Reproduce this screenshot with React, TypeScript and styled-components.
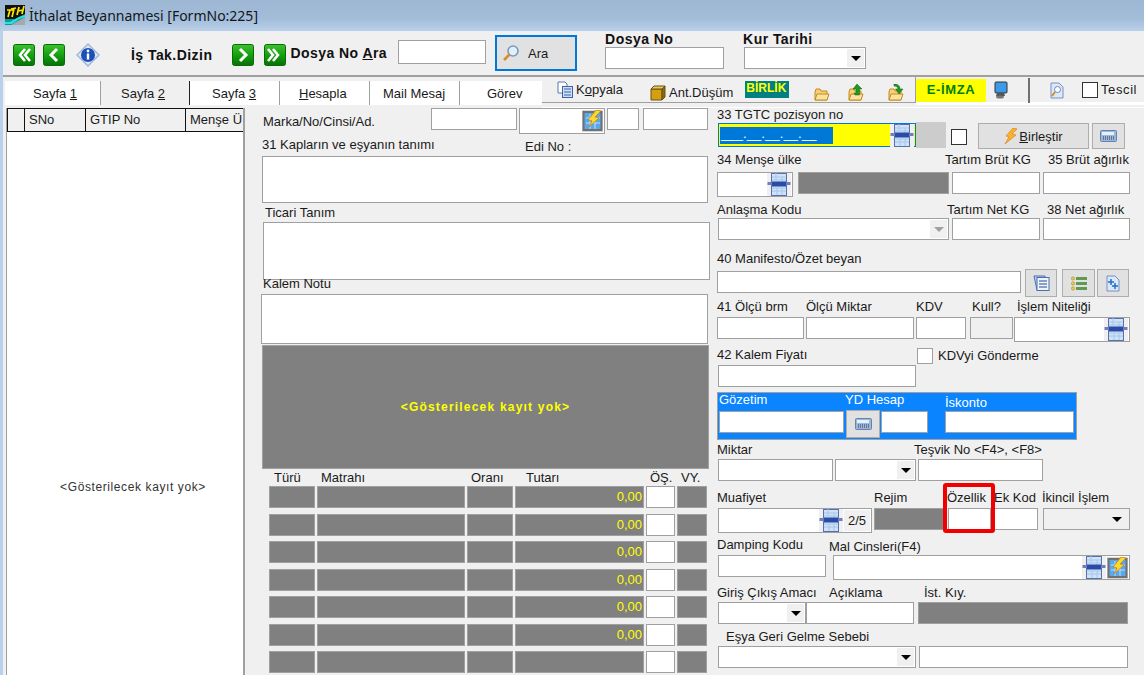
import React from 'react';
import styled, { createGlobalStyle } from 'styled-components';

const GlobalStyle = createGlobalStyle`
  html, body {
    margin: 0;
    padding: 0;
    background: #f0f0f0;
  }
  body {
    font-family: "Liberation Sans", Arial, sans-serif;
    font-size: 13px;
    color: #1a1a1a;
  }
`;

const Screen = styled.div`
  width: 1144px;
  height: 675px;
  overflow: hidden;
  display: flex;
  flex-direction: column;
  background: #f0f0f0;
`;

const TitleBar = styled.div`
  height: 31px;
  flex: none;
  display: flex;
  align-items: center;
  gap: 4px;
  padding-left: 5px;
  background: linear-gradient(#9db7d4, #a3bcd8 60%, #b9d1ea);
  font-family: "Noto Sans", sans-serif;
  font-size: 14px;
  color: #101820;
`;

const Window = styled.div`
  flex: 1;
  min-height: 0;
  display: flex;
  flex-direction: column;
  border-left: 3px solid #b9d1ea;
`;

const Toolbar = styled.div`
  height: 46px;
  flex: none;
  box-sizing: border-box;
  display: flex;
  border-bottom: 2px solid #a0a0a0;
`;

const ToolSlot = styled.div<{ $ml?: number; $mt?: number }>`
  flex: none;
  margin-left: ${(p) => p.$ml ?? 0}px;
  margin-top: ${(p) => p.$mt ?? 0}px;
  align-self: flex-start;
  display: flex;
`;

const BoldText = styled.span<{ $ml?: number; $mt?: number }>`
  flex: none;
  margin-left: ${(p) => p.$ml ?? 0}px;
  margin-top: ${(p) => p.$mt ?? 0}px;
  line-height: 16px;
  font-weight: bold;
  font-size: 14px;
  letter-spacing: 0.45px;
  color: #111;
  white-space: nowrap;
`;

const AraButton = styled.div`
  flex: none;
  margin-left: 9px;
  margin-top: 4px;
  width: 82px;
  height: 36px;
  box-sizing: border-box;
  border: 2px solid #0078d7;
  background: #e1e1e1;
  display: flex;
  align-items: center;
  padding-left: 5px;
  gap: 8px;
`;

const ToolField = styled.div<{ $ml: number }>`
  flex: none;
  margin-left: ${(p) => p.$ml}px;
  display: flex;
  flex-direction: column;
`;

const TabRow = styled.div`
  height: 28px;
  flex: none;
  display: flex;
`;

const TabStrip = styled.div`
  flex: none;
  margin-left: 2px;
  margin-top: 4px;
  height: 24px;
  display: flex;
  background: #fff;
`;

const Tab = styled.div<{ $w: number; $pl: number; $active?: boolean; $dark?: boolean; $last?: boolean }>`
  box-sizing: border-box;
  width: ${(p) => p.$w}px;
  padding-left: ${(p) => p.$pl}px;
  line-height: 26px;
  background: ${(p) => (p.$active ? '#f0f0f0' : '#fff')};
  border-right: ${(p) => (p.$last ? 'none' : `1px solid ${p.$dark ? '#222' : '#a0a0a0'}`)};
  white-space: nowrap;
`;

const ActionStrip = styled.div`
  box-sizing: border-box;
  width: 374px;
  height: 26px;
  flex: none;
  display: flex;
  align-items: center;
  border-right: 1px solid #a0a0a0;
  border-bottom: 1px solid #a0a0a0;
`;

const ActionItem = styled.div<{ $ml: number; $mt?: number }>`
  flex: none;
  margin-left: ${(p) => p.$ml}px;
  margin-top: ${(p) => p.$mt ?? 0}px;
  display: flex;
  align-items: center;
  gap: 3px;
  white-space: nowrap;
`;

const BirlikBadge = styled.div`
  flex: none;
  margin-left: 12px;
  width: 44px;
  height: 17px;
  background: #008080;
  color: #ffff00;
  font-weight: bold;
  font-size: 12px;
  line-height: 14px;
  padding-left: 1px;
  box-sizing: border-box;
  white-space: nowrap;
`;

const EImza = styled.div`
  flex: none;
  margin-top: 1px;
  width: 70px;
  height: 23px;
  background: #ffff00;
  color: #008000;
  font-weight: bold;
  font-size: 13px;
  line-height: 21px;
  letter-spacing: 0.6px;
  text-align: center;
`;

const TopRight = styled.div`
  flex: none;
  width: 228px;
  height: 28px;
  box-sizing: border-box;
  padding-bottom: 2px;
  display: flex;
  align-items: center;
  background: linear-gradient(#fff, #fff) bottom / 100% 3px no-repeat;
`;

const ThickRule = styled.div`
  flex: none;
  width: 2px;
  height: 25px;
  margin-left: 20px;
  background: #707070;
`;

const TescilText = styled.span`
  letter-spacing: 0.6px;
`;

const Main = styled.div`
  flex: 1;
  min-height: 0;
  display: flex;
  background: linear-gradient(#fff, #fff) 539px 2px / 602px 1px no-repeat;
`;

const GridPane = styled.div`
  flex: none;
  margin-left: 3px;
  margin-top: 3px;
  width: 239px;
  box-sizing: border-box;
  border-left: 1px solid #a0a0a0;
  border-right: 2px solid #a0a0a0;
  background: #fff;
  display: flex;
  flex-direction: column;
`;

const GridHead = styled.div`
  height: 24px;
  flex: none;
  box-sizing: border-box;
  display: flex;
  border-top: 1px solid #111;
  border-bottom: 1px solid #111;
  background: #f0f0f0;
  overflow: hidden;
`;

const GridCol = styled.div<{ $w: number }>`
  flex: none;
  box-sizing: border-box;
  width: ${(p) => p.$w}px;
  padding-left: 4px;
  line-height: 22px;
  border-left: 1px solid #111;
  white-space: nowrap;
`;

const EmptyBody = styled.div`
  flex: 1;
  display: flex;
  align-items: center;
  justify-content: center;
  padding-top: 166px;
  padding-left: 16px;
  font-size: 12px;
  letter-spacing: 0.6px;
  color: #333;
`;

const CenterCol = styled.div`
  flex: none;
  width: 472px;
  display: flex;
  flex-direction: column;
`;

const RightCol = styled.div`
  flex: none;
  position: relative;
  width: 427px;
  display: flex;
  flex-direction: column;
`;

const FormRow = styled.div<{ $h: number; $mt?: number }>`
  flex: none;
  display: flex;
  align-items: flex-start;
  height: ${(p) => p.$h}px;
  margin-top: ${(p) => p.$mt ?? 0}px;
`;

const Lbl = styled.span<{ $w?: number; $ml?: number; $mt?: number; $white?: boolean }>`
  flex: none;
  display: block;
  box-sizing: border-box;
  ${(p) => (p.$w ? `width: ${p.$w}px;` : '')}
  margin-left: ${(p) => p.$ml ?? 0}px;
  margin-top: ${(p) => p.$mt ?? 0}px;
  line-height: 18px;
  color: ${(p) => (p.$white ? '#fff' : '#1a1a1a')};
  white-space: nowrap;
`;

const Field = styled.div<{ $w: number; $h?: number; $ml?: number; $mt?: number; $bg?: string; $edge?: string }>`
  flex: none;
  box-sizing: border-box;
  width: ${(p) => p.$w}px;
  height: ${(p) => p.$h ?? 22}px;
  margin-left: ${(p) => p.$ml ?? 0}px;
  margin-top: ${(p) => p.$mt ?? 0}px;
  border: 1px solid ${(p) => p.$edge ?? '#a0a0a0'};
  background: ${(p) => p.$bg ?? '#fff'};
  display: flex;
  align-items: center;
  justify-content: flex-end;
`;

const DropButton = styled.div<{ $disabled?: boolean }>`
  width: 17px;
  height: 18px;
  margin-right: 1px;
  background: #f0f0f0;
  display: flex;
  align-items: center;
  justify-content: center;
  &::after {
    content: '';
    border-left: 5px solid transparent;
    border-right: 5px solid transparent;
    border-top: 5px solid ${(p) => (p.$disabled ? '#a0a0a0' : '#000')};
  }
`;

const FlatArrow = styled.div`
  margin-right: 7px;
  border-left: 5px solid transparent;
  border-right: 5px solid transparent;
  border-top: 5px solid #000;
`;

const MaskFill = styled.div`
  flex: none;
  margin-right: auto;
  margin-left: 1px;
  box-sizing: border-box;
  width: 113px;
  height: 17px;
  background: #0078d7;
  color: #fff;
  font-size: 13px;
  line-height: 13px;
  padding-left: 1px;
  letter-spacing: 0.1px;
  white-space: nowrap;
  overflow: hidden;
`;

const Button = styled.div<{ $w: number; $h?: number; $ml?: number; $mt?: number; $bg?: string; $edge?: string }>`
  flex: none;
  box-sizing: border-box;
  width: ${(p) => p.$w}px;
  height: ${(p) => p.$h ?? 26}px;
  margin-left: ${(p) => p.$ml ?? 0}px;
  margin-top: ${(p) => p.$mt ?? 0}px;
  border: 1px solid ${(p) => p.$edge ?? '#adadad'};
  background: ${(p) => p.$bg ?? '#e1e1e1'};
  display: flex;
  align-items: center;
  justify-content: center;
  gap: 1px;
`;

const CheckBox = styled.div<{ $ml?: number; $mt?: number; $dark?: boolean }>`
  flex: none;
  box-sizing: border-box;
  width: 16px;
  height: 16px;
  margin-left: ${(p) => p.$ml ?? 0}px;
  margin-top: ${(p) => p.$mt ?? 0}px;
  background: #fff;
  border: 1px solid ${(p) => (p.$dark ? '#333' : '#a0a0a0')};
`;

const GrayPanel = styled.div`
  flex: none;
  box-sizing: border-box;
  margin-left: 17px;
  margin-top: 1px;
  width: 447px;
  height: 124px;
  background: #808080;
  border: 1px solid #a0a0a0;
  display: flex;
  align-items: center;
  justify-content: center;
  color: #ffff00;
  font-weight: bold;
  font-size: 12px;
  letter-spacing: 1.2px;
`;

const TaxLine = styled.div<{ $mt?: number }>`
  flex: none;
  display: grid;
  grid-template-columns: 46px 148px 46px 129px 29px 30px;
  column-gap: 2px;
  margin-left: 24px;
  margin-top: ${(p) => p.$mt ?? 0}px;
  height: 22px;
`;

const TaxCell = styled.div<{ $white?: boolean }>`
  box-sizing: border-box;
  border: 1px solid #a0a0a0;
  background: ${(p) => (p.$white ? '#fff' : '#808080')};
  color: #ffff00;
  font-size: 13px;
  line-height: 20px;
  text-align: right;
  padding-right: 1px;
`;

const BluePanel = styled.div`
  flex: none;
  box-sizing: border-box;
  width: 360px;
  height: 48px;
  margin-top: 5px;
  border: 1px solid #a0a0a0;
  background: #0a84ff;
`;

const KalemCol = styled.div`
  flex: none;
  display: flex;
  flex-direction: column;
  width: 200px;
`;

const RedMark = styled.div`
  position: absolute;
  left: 226px;
  top: 378px;
  width: 52px;
  height: 50px;
  box-sizing: border-box;
  border: 4px solid #f00000;
  border-radius: 3px;
  pointer-events: none;
`;

const Pager = styled.span`
  flex: none;
  width: 26px;
  height: 21px;
  margin-right: 1px;
  background: #f0f0f0;
  line-height: 21px;
  text-align: center;
`;

const Logo = () => (
  <svg width="20" height="22" viewBox="0 0 20 22">
    <rect x="0" y="0" width="20" height="20" fill="#0a9c92" />
    <path d="M0 0 H20 V9 L10 14 H0 Z" fill="#111" />
    <path d="M20 12 V20 H6 Z" fill="#a8a8a8" />
    <path d="M0 17 L5 17 L14 12 L20 10 V12 L14 14 L7 19 L0 19 Z" fill="#27e3ea" />
    <path d="M3 12 L5 5 M2 5 L8 5 M7 12 L9 4 M6 4 L11 3 M12 10 L14 2 M17 9 L19 1 M13 6 L18 5" stroke="#ffe600" strokeWidth="1.7" fill="none" />
  </svg>
);

const GreenButton = ({ dir, double }: { dir: 'l' | 'r'; double?: boolean }) => {
  const pts = dir === 'l' ? ['12,5 7,11 12,17', '17,5 12,11 17,17'] : ['9,5 14,11 9,17', '4,5 9,11 4,17'];
  return (
    <svg width="22" height="22" viewBox="0 0 22 22">
      <defs>
        <linearGradient id="grn" x1="0" y1="0" x2="0" y2="1">
          <stop offset="0" stopColor="#3dc22f" />
          <stop offset="0.5" stopColor="#15a010" />
          <stop offset="1" stopColor="#067006" />
        </linearGradient>
      </defs>
      <rect x="0.5" y="0.5" width="21" height="21" rx="2" fill="url(#grn)" stroke="#0b6b0b" />
      {double ? (
        pts.map((p) => <polyline key={p} points={p} fill="none" stroke="#fff" strokeWidth="2.6" />)
      ) : (
        <polyline points={dir === 'l' ? '14,5 8,11 14,17' : '8,5 14,11 8,17'} fill="none" stroke="#fff" strokeWidth="3" />
      )}
    </svg>
  );
};

const InfoIcon = () => (
  <svg width="24" height="24" viewBox="0 0 24 24">
    <path d="M12 1 L23 12 L12 23 L1 12 Z" fill="#dfe8f6" stroke="#9fb4d8" strokeWidth="1.4" />
    <circle cx="12" cy="12" r="7" fill="#1c50b8" />
    <circle cx="12" cy="8" r="1.4" fill="#fff" />
    <rect x="10.8" y="10.5" width="2.4" height="6" fill="#fff" />
  </svg>
);

const MagnifierIcon = () => (
  <svg width="18" height="18" viewBox="0 0 18 18">
    <circle cx="11" cy="7" r="5" fill="#dff0fb" stroke="#7a9ab8" strokeWidth="1.6" />
    <path d="M7.5 10.5 L2 16" stroke="#d98a2b" strokeWidth="2.6" />
  </svg>
);

const LookupIcon = () => (
  <svg width="24" height="23" viewBox="0 0 24 23" style={{ flex: 'none', marginRight: 1 }}>
    <rect x="0" y="0" width="24" height="23" fill="#f0f0f0" />
    <rect x="4.5" y="0.5" width="15" height="22" fill="#cfe3f7" stroke="#5a6fb0" />
    <path d="M5 4 H19 M5 7 H19 M5 15 H19 M5 18 H19 M9 0 V7 M15 4 V10 M10 15 V22 M15 15 V22" stroke="#a5c6ea" strokeWidth="1" />
    <rect x="0.5" y="9" width="23" height="3" fill="#6f7fbe" />
    <rect x="5" y="8.5" width="14" height="5" fill="#2c4aa8" />
  </svg>
);

const BoltIcon = () => (
  <svg width="14" height="17" viewBox="0 0 14 17">
    <path d="M9 0 L13 1 L8 6 L12 7 L1 16 L5 9 L2 8 Z" fill="#f7b52a" stroke="#e0701a" strokeWidth="0.6" />
  </svg>
);

const CalcIcon = () => (
  <svg width="17" height="12" viewBox="0 0 17 12">
    <rect x="0.5" y="0.5" width="16" height="11" rx="1" fill="#9ab8de" stroke="#6a80a8" />
    <rect x="2" y="2" width="12" height="3" fill="#e6f0fa" />
    <path d="M3 7 H14 M3 9 H14" stroke="#334" strokeWidth="1" strokeDasharray="1 1" />
  </svg>
);

const WallBoltIcon = () => (
  <svg width="21" height="22" viewBox="0 0 21 22" style={{ flex: 'none', marginRight: 1 }}>
    <rect x="0" y="0" width="21" height="22" fill="#d8d8d8" />
    <rect x="1.5" y="2" width="18" height="18" fill="#5aa8e8" stroke="#707070" strokeWidth="2" />
    <path d="M4 8 H18 M4 13 H18 M8 4 V19 M13 4 V19" stroke="#b9e0fb" />
    <path d="M14 0 L19 1 L13 7 L17 8 L7 17 L10 11 L6 10 Z" fill="#f6dc2a" stroke="#d0701a" strokeWidth="0.7" />
  </svg>
);

const NotesIcon = () => (
  <svg width="17" height="18" viewBox="0 0 17 18">
    <path d="M1 2 H12 V16 H4 Z" fill="#b8d4f0" stroke="#4a6fb0" />
    <rect x="4" y="3.5" width="12" height="13" fill="#eef5fd" stroke="#4a6fb0" />
    <path d="M6 7 H14 M6 10 H14 M6 13 H14" stroke="#2a4a90" />
  </svg>
);

const ListIcon = () => (
  <svg width="16" height="15" viewBox="0 0 16 15">
    <circle cx="2" cy="2.5" r="1.6" fill="#f4d040" stroke="#a08020" strokeWidth="0.6" />
    <circle cx="2" cy="7.5" r="1.6" fill="#f4d040" stroke="#a08020" strokeWidth="0.6" />
    <circle cx="2" cy="12.5" r="1.6" fill="#f4d040" stroke="#a08020" strokeWidth="0.6" />
    <rect x="5" y="1" width="11" height="3" fill="#5f9a50" />
    <rect x="5" y="6" width="11" height="3" fill="#5f9a50" />
    <rect x="5" y="11" width="11" height="3" fill="#5f9a50" />
  </svg>
);

const PageAddIcon = () => (
  <svg width="14" height="17" viewBox="0 0 14 17">
    <path d="M1 1 H9 L13 5 V16 H1 Z" fill="#dbe8f8" stroke="#7a90c0" />
    <path d="M5 4 V10 M2 7 H8 M9 8 V14 M6 11 H12" stroke="#1c6fd0" strokeWidth="1.5" />
  </svg>
);

const CopyIcon = () => (
  <svg width="16" height="17" viewBox="0 0 16 17">
    <path d="M1 1 H8 L10 3 V12 H1 Z" fill="#fff" stroke="#5a78b0" />
    <rect x="5.5" y="5.5" width="10" height="11" fill="#cfe0f6" stroke="#3d62a8" />
    <path d="M7 8 H14 M7 11 H14 M7 14 H14" stroke="#3d62a8" />
  </svg>
);

const CrateIcon = () => (
  <svg width="16" height="16" viewBox="0 0 16 16">
    <path d="M1 4 H12 V15 H1 Z" fill="#d4a010" stroke="#6a5010" />
    <path d="M1 4 L4 1 H15 L12 4 Z" fill="#e8c860" stroke="#6a5010" />
    <path d="M12 4 L15 1 V12 L12 15 Z" fill="#8a6c10" stroke="#6a5010" />
  </svg>
);

const FolderIcon = ({ arrow }: { arrow?: 'up' | 'right' }) => (
  <svg width="16" height="18" viewBox="0 0 16 18">
    <path d="M1 8 V16 H13 V7 H7 L6 5 H2 Z" fill="#f7d074" stroke="#c58a1e" />
    <path d="M1 16 L3 10 H15 L13 16 Z" fill="#fbe2a0" stroke="#c58a1e" />
    {arrow === 'up' && <path d="M9 0 L14 5 H11.5 V11 H7 L6 9 H8 V5 H5 Z" fill="#1f9a1f" stroke="#146014" strokeWidth="0.5" />}
    {arrow === 'right' && <path d="M6 0 C10 0 12 2 12 5 H15 L11 10 L7.5 5 H10 C10 3 8 2 6 2 Z" fill="#1f9a1f" stroke="#146014" strokeWidth="0.5" />}
  </svg>
);

const MonitorIcon = () => (
  <svg width="14" height="18" viewBox="0 0 14 18">
    <rect x="1" y="1" width="12" height="11" rx="1" fill="#3c9ae8" stroke="#333" />
    <path d="M3 12 L2 15 H11 L10 12 Z" fill="#555" />
    <ellipse cx="6" cy="16" rx="4" ry="1.5" fill="#777" />
  </svg>
);

const PreviewIcon = () => (
  <svg width="14" height="17" viewBox="0 0 14 17">
    <path d="M1 1 H9 L13 5 V16 H1 Z" fill="#dbe8f8" stroke="#7a90c0" />
    <circle cx="7.5" cy="7.5" r="3" fill="#fff" stroke="#6a86b8" />
    <path d="M5 10 L2 14" stroke="#d98a2b" strokeWidth="2" />
  </svg>
);

const taxRows = [
  { mt: 0, val: '0,00' },
  { mt: 6, val: '0,00' },
  { mt: 5, val: '0,00' },
  { mt: 6, val: '0,00' },
  { mt: 5, val: '0,00' },
  { mt: 6, val: '0,00' },
  { mt: 5, val: '' },
];

export default function App() {
  return (
    <Screen>
      <GlobalStyle />
      <TitleBar>
        <Logo />
        İthalat Beyannamesi [FormNo:225]
      </TitleBar>
      <Window>
        <Toolbar>
          <ToolSlot $ml={10} $mt={13}><GreenButton dir="l" double /></ToolSlot>
          <ToolSlot $ml={8} $mt={13}><GreenButton dir="l" /></ToolSlot>
          <ToolSlot $ml={11} $mt={12}><InfoIcon /></ToolSlot>
          <BoldText $ml={31} $mt={16}>İş Tak.Dizin</BoldText>
          <ToolSlot $ml={20} $mt={13}><GreenButton dir="r" /></ToolSlot>
          <ToolSlot $ml={10} $mt={13}><GreenButton dir="r" double /></ToolSlot>
          <BoldText $ml={4} $mt={14}>Dosya No <u>A</u>ra</BoldText>
          <Field $w={88} $h={24} $ml={11} $mt={9} />
          <AraButton><MagnifierIcon />Ara</AraButton>
          <ToolField $ml={28}>
            <BoldText>Dosya No</BoldText>
            <Field $w={119} />
          </ToolField>
          <ToolField $ml={20}>
            <BoldText $ml={-1}>Kur Tarihi</BoldText>
            <Field $w={122}><DropButton /></Field>
          </ToolField>
        </Toolbar>
        <TabRow>
          <TabStrip>
            <Tab $w={96} $pl={28}>Sayfa <u>1</u></Tab>
            <Tab $w={89} $pl={20} $active $dark>Sayfa <u>2</u></Tab>
            <Tab $w={90} $pl={22}>Sayfa <u>3</u></Tab>
            <Tab $w={90} $pl={19}><u>H</u>esapla</Tab>
            <Tab $w={90} $pl={13}>Mail Mesaj</Tab>
            <Tab $w={82} $pl={27} $last>Görev</Tab>
          </TabStrip>
          <ActionStrip>
            <ActionItem $ml={15} $mt={-1}><CopyIcon /><span>K<u>o</u>pyala</span></ActionItem>
            <ActionItem $ml={27} $mt={6}><CrateIcon /><span>Ant.Düşüm</span></ActionItem>
            <BirlikBadge>BİRLİK</BirlikBadge>
            <ActionItem $ml={25} $mt={6}><FolderIcon /></ActionItem>
            <ActionItem $ml={18} $mt={6}><FolderIcon arrow="up" /></ActionItem>
            <ActionItem $ml={24} $mt={6}><FolderIcon arrow="right" /></ActionItem>
          </ActionStrip>
          <TopRight>
            <EImza>E-İMZA</EImza>
            <ActionItem $ml={8}><MonitorIcon /></ActionItem>
            <ThickRule />
            <ActionItem $ml={20}><PreviewIcon /></ActionItem>
            <CheckBox $ml={18} $dark />
            <ActionItem $ml={3} $mt={-1}><TescilText>Tescil</TescilText></ActionItem>
          </TopRight>
        </TabRow>
        <Main>
          <GridPane>
            <GridHead>
              <GridCol $w={17} />
              <GridCol $w={61}>SNo</GridCol>
              <GridCol $w={100}>GTIP No</GridCol>
              <GridCol $w={60}>Menşe Ü</GridCol>
            </GridHead>
            <EmptyBody>{'<Gösterilecek kayıt yok>'}</EmptyBody>
          </GridPane>

          <CenterCol>
            <FormRow $h={26} $mt={3}>
              <Lbl $w={168} $ml={18} $mt={5}>Marka/No/Cinsi/Ad.</Lbl>
              <Field $w={86} />
              <Field $w={86} $h={26} $ml={2}><WallBoltIcon /></Field>
              <Field $w={32} $ml={2} />
              <Field $w={65} $ml={4} />
            </FormRow>
            <FormRow $h={22}>
              <Lbl $w={263} $ml={17} $mt={2}>31 Kapların ve eşyanın tanımı</Lbl>
              <Lbl $mt={4}>Edi No :</Lbl>
            </FormRow>
            <Field $w={446} $h={47} $ml={17} />
            <FormRow $h={19}>
              <Lbl $ml={20} $mt={1}>Ticari Tanım</Lbl>
            </FormRow>
            <Field $w={447} $h={58} $ml={18} />
            <FormRow $h={14}>
              <Lbl $ml={18} $mt={-5}>Kalem Notu</Lbl>
            </FormRow>
            <Field $w={447} $h={50} $ml={16} />
            <GrayPanel>{'<Gösterilecek kayıt yok>'}</GrayPanel>
            <FormRow $h={17}>
              <Lbl $w={47} $ml={29}>Türü</Lbl>
              <Lbl $w={150}>Matrahı</Lbl>
              <Lbl $w={55}>Oranı</Lbl>
              <Lbl $w={124}>Tutarı</Lbl>
              <Lbl $w={31}>ÖŞ.</Lbl>
              <Lbl>VY.</Lbl>
            </FormRow>
            {taxRows.map((r, i) => (
              <TaxLine key={i} $mt={r.mt}>
                <TaxCell />
                <TaxCell />
                <TaxCell />
                <TaxCell>{r.val}</TaxCell>
                <TaxCell $white />
                <TaxCell />
              </TaxLine>
            ))}
          </CenterCol>

          <RightCol>
            <FormRow $h={17}>
              <Lbl $mt={1}>33 TGTC pozisyon no</Lbl>
            </FormRow>
            <FormRow $h={27}>
              <Field $w={198} $h={24} $ml={1} $mt={1} $bg="#ffff00" $edge="#0078d7">
                <MaskFill>___.__.__.__.__</MaskFill>
                <LookupIcon />
              </Field>
              <Button $w={30} $bg="#cccccc" $edge="#cccccc" />
              <CheckBox $ml={5} $mt={7} $dark />
              <Button $w={111} $ml={11} $mt={1}><BoltIcon /><span><u>B</u>irleştir</span></Button>
              <Button $w={33} $ml={3} $mt={1}><CalcIcon /></Button>
            </FormRow>
            <FormRow $h={23}>
              <Lbl $w={228} $mt={2}>34 Menşe ülke</Lbl>
              <Lbl $w={103} $mt={2}>Tartım Brüt KG</Lbl>
              <Lbl $mt={2}>35 Brüt ağırlık</Lbl>
            </FormRow>
            <FormRow $h={25}>
              <Field $w={76} $h={25}><LookupIcon /></Field>
              <Field $w={151} $ml={5} $bg="#808080" />
              <Field $w={88} $ml={3} />
              <Field $w={87} $ml={3} />
            </FormRow>
            <FormRow $h={21}>
              <Lbl $w={230} $mt={4}>Anlaşma Kodu</Lbl>
              <Lbl $w={100} $mt={4}>Tartım Net KG</Lbl>
              <Lbl $mt={4}>38 Net ağırlık</Lbl>
            </FormRow>
            <FormRow $h={22}>
              <Field $w={231} $ml={1}><DropButton $disabled /></Field>
              <Field $w={88} $ml={3} />
              <Field $w={87} $ml={3} />
            </FormRow>
            <FormRow $h={29}>
              <Lbl $mt={10}>40 Manifesto/Özet beyan</Lbl>
            </FormRow>
            <FormRow $h={28}>
              <Field $w={304} $mt={2} />
              <Button $w={32} $h={28} $ml={4}><NotesIcon /></Button>
              <Button $w={33} $h={28} $ml={5}><ListIcon /></Button>
              <Button $w={32} $h={28} $ml={2}><PageAddIcon /></Button>
            </FormRow>
            <FormRow $h={20}>
              <Lbl $w={89} $mt={1}>41 Ölçü brm</Lbl>
              <Lbl $w={110} $mt={1}>Ölçü Miktar</Lbl>
              <Lbl $w={56} $mt={1}>KDV</Lbl>
              <Lbl $w={45} $mt={1}>Kull?</Lbl>
              <Lbl $mt={1}>İşlem Niteliği</Lbl>
            </FormRow>
            <FormRow $h={25}>
              <Field $w={87} />
              <Field $w={108} $ml={2} />
              <Field $w={50} $ml={2} />
              <Field $w={43} $ml={4} $bg="#f0f0f0" />
              <Field $w={116} $h={25} $ml={1}><LookupIcon /></Field>
            </FormRow>
            <FormRow $h={45}>
              <KalemCol>
                <Lbl $mt={4}>42 Kalem Fiyatı</Lbl>
                <Field $w={198} $ml={1} $mt={1} />
              </KalemCol>
              <CheckBox $mt={6} />
              <Lbl $ml={5} $mt={5}>KDVyi Gönderme</Lbl>
            </FormRow>
            <BluePanel>
              <FormRow $h={17}>
                <Lbl $w={126} $ml={1} $mt={-2} $white>Gözetim</Lbl>
                <Lbl $w={100} $mt={-2} $white>YD Hesap</Lbl>
                <Lbl $mt={1} $white>İskonto</Lbl>
              </FormRow>
              <FormRow $h={28}>
                <Field $w={125} $ml={1} $mt={1} />
                <Button $w={34} $h={28} $ml={2}><CalcIcon /></Button>
                <Field $w={47} $ml={1} $mt={1} />
                <Field $w={129} $ml={17} $mt={1} />
              </FormRow>
            </BluePanel>
            <FormRow $h={19}>
              <Lbl $w={197} $mt={1}>Miktar</Lbl>
              <Lbl $mt={1}>Teşvik No &lt;F4&gt;, &lt;F8&gt;</Lbl>
            </FormRow>
            <FormRow $h={22}>
              <Field $w={115} $ml={1} />
              <Field $w={81} $ml={2}><DropButton /></Field>
              <Field $w={125} $ml={2} />
            </FormRow>
            <FormRow $h={27}>
              <Lbl $w={157} $mt={8}>Muafiyet</Lbl>
              <Lbl $w={73} $mt={8}>Rejim</Lbl>
              <Lbl $w={47} $mt={8}>Özellik</Lbl>
              <Lbl $w={48} $mt={8}>Ek Kod</Lbl>
              <Lbl $mt={8}>İkincil İşlem</Lbl>
            </FormRow>
            <FormRow $h={25}>
              <Field $w={154} $h={25} $ml={1}><LookupIcon /><Pager>2/5</Pager></Field>
              <Field $w={71} $ml={2} $bg="#808080" />
              <Field $w={43} $ml={3} />
              <Field $w={47} />
              <Field $w={87} $ml={5} $bg="#f0f0f0"><FlatArrow /></Field>
            </FormRow>
            <FormRow $h={22}>
              <Lbl $w={112} $mt={3}>Damping Kodu</Lbl>
              <Lbl $mt={5}>Mal Cinsleri(F4)</Lbl>
            </FormRow>
            <FormRow $h={25}>
              <Field $w={108} $ml={1} />
              <Field $w={297} $h={25} $ml={7}><LookupIcon /><WallBoltIcon /></Field>
            </FormRow>
            <FormRow $h={22}>
              <Lbl $w={112} $mt={4}>Giriş Çıkış Amacı</Lbl>
              <Lbl $w={95} $mt={4}>Açıklama</Lbl>
              <Lbl $mt={4}>İst. Kıy.</Lbl>
            </FormRow>
            <FormRow $h={22}>
              <Field $w={88} $ml={1}><DropButton /></Field>
              <Field $w={108} />
              <Field $w={210} $ml={4} $bg="#808080" />
            </FormRow>
            <FormRow $h={22}>
              <Lbl $ml={9} $mt={4}>Eşya Geri Gelme Sebebi</Lbl>
            </FormRow>
            <FormRow $h={22}>
              <Field $w={198} $ml={1}><DropButton /></Field>
              <Field $w={209} $ml={3} />
            </FormRow>
            <RedMark />
          </RightCol>
        </Main>
      </Window>
    </Screen>
  );
}
